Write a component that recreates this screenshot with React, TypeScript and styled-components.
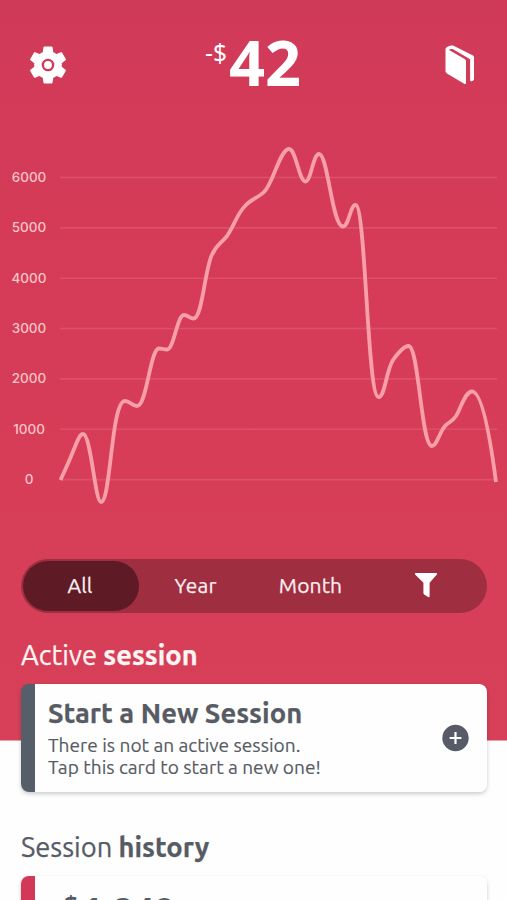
import React from "react";
import styled, { createGlobalStyle } from "styled-components";

const GlobalStyle = createGlobalStyle`
  * { box-sizing: border-box; }
  html, body { margin: 0; height: 100%; overflow: hidden; background: #fefefe; }
  body { font-family: Ubuntu, "Noto Sans", sans-serif; color: #565b64; }
  button { border: 0; padding: 0; background: none; color: inherit; font: inherit; }
`;

const Screen = styled.main`
  width: 507px;
  height: 900px;
  overflow: hidden;
  background: linear-gradient(#d03a59 0, #d53b57 220px, #d73d57 480px, #d74058 740px, #fefefe 741px);
`;

const Header = styled.header`
  height: 130px;
  display: grid;
  grid-template-columns: 96px 1fr 95px;
  padding-top: 32px;
  color: #fff;
`;

const IconButton = styled.button`
  height: 66px;
  display: flex;
  align-items: center;
  justify-content: center;
`;

const Balance = styled.h1`
  margin: 0;
  height: 66px;
  display: flex;
  align-items: flex-start;
  padding-left: 109px;
  font-family: "Noto Sans", sans-serif;
`;

const Currency = styled.span`
  width: 24px;
  font-size: 24.5px;
  font-weight: 400;
  line-height: 42px;
`;

const Amount = styled.span`
  font-size: 63px;
  font-weight: 700;
  line-height: 60px;
`;

const Chart = styled.svg`
  display: block;
  width: 507px;
  height: 400px;
`;

const AxisLabel = styled.text`
  font-family: Inter, sans-serif;
  font-size: 13.5px;
  font-weight: 450;
  fill: #f9c3c8;
  text-anchor: middle;
`;

const Tabs = styled.nav`
  display: grid;
  grid-template-columns: 116px repeat(3, 115px);
  width: 466px;
  height: 54px;
  margin: 29px 0 0 21px;
  padding: 2px;
  border-radius: 27px;
  background: #9f2e41;
`;

const Tab = styled.button<{ $active?: boolean }>`
  display: flex;
  align-items: center;
  justify-content: center;
  padding: 0 2px 2px 0;
  border-radius: 26px;
  font-size: 21px;
  letter-spacing: 0.1px;
  -webkit-text-stroke: 0.25px currentColor;
  color: #fdeef0;
  background: ${(p) => (p.$active ? "#5e1b25" : "transparent")};
`;

const Heading = styled.h2<{ $light?: boolean }>`
  margin: 0;
  padding-left: 21px;
  height: 38px;
  line-height: 37px;
  font-size: 27.3px;
  font-weight: 400;
  white-space: nowrap;
  -webkit-text-stroke: 0.25px currentColor;
  color: ${(p) => (p.$light ? "#fff5f5" : "#565b64")};
`;

const Card = styled.section<{ $accent: string }>`
  display: grid;
  grid-template-columns: 14px 1fr 64px;
  width: 466px;
  height: 108px;
  margin: 0 0 0 21px;
  overflow: hidden;
  border-radius: 8px;
  background: linear-gradient(to right, ${(p) => p.$accent} 14px, #fefefe 14px);
  box-shadow: 0 2px 4px rgba(0, 0, 0, 0.2);
`;

const CardBody = styled.div`
  grid-column: 2;
  padding: 12px 0 0 13px;
  white-space: nowrap;
`;

const CardTitle = styled.h3`
  margin: 0;
  height: 39px;
  line-height: 34px;
  font-size: 27.4px;
  font-weight: 700;
  -webkit-text-stroke: 0.25px currentColor;
`;

const CardText = styled.p`
  margin: 0;
  font-size: 19.1px;
  line-height: 21.5px;
  -webkit-text-stroke: 0.15px currentColor;
`;

const CardAction = styled(IconButton)`
  height: 107px;
`;

const HistoryAmount = styled.div`
  grid-column: 2;
  display: flex;
  align-items: flex-start;
  padding: 14px 0 0 29px;
  font-family: "Noto Sans", sans-serif;
  font-weight: 700;
  font-size: 36px;
  line-height: 42px;
`;

const HistoryCurrency = styled.span`
  width: 18px;
  font-size: 24px;
  line-height: 28px;
`;

const Spacer = styled.div<{ $height: number }>`
  height: ${(p) => p.$height}px;
`;

const Gear = () => (
  <svg width="46" height="46" viewBox="0 0 24 24" fill="currentColor">
    <path
      fillRule="evenodd"
      d="M19.14 12.94c.04-.3.06-.61.06-.94 0-.32-.02-.64-.07-.94l2.03-1.58c.18-.14.23-.41.12-.61l-1.92-3.32c-.12-.22-.37-.29-.59-.22l-2.39.96c-.5-.38-1.03-.7-1.62-.94L14.4 2.81c-.04-.24-.24-.41-.48-.41h-3.84c-.24 0-.43.17-.47.41l-.36 2.54c-.59.24-1.13.57-1.62.94l-2.39-.96c-.22-.08-.47 0-.59.22L2.74 8.87c-.12.21-.08.47.12.61l2.03 1.58c-.05.3-.09.63-.09.94s.02.64.07.94l-2.03 1.58c-.18.14-.23.41-.12.61l1.92 3.32c.12.22.37.29.59.22l2.39-.96c.5.38 1.03.7 1.62.94l.36 2.54c.05.24.24.41.48.41h3.84c.24 0 .44-.17.47-.41l.36-2.54c.59-.24 1.13-.56 1.62-.94l2.39.96c.22.08.47 0 .59-.22l1.92-3.32c.12-.22.07-.47-.12-.61zM12 15.3a3.3 3.3 0 1 1 0-6.6 3.3 3.3 0 0 1 0 6.6z"
    />
    <circle cx="12" cy="12" r="2.05" />
  </svg>
);

const Book = () => (
  <svg width="30" height="40" viewBox="0 0 30 40" fill="currentColor">
    <path
      fillRule="evenodd"
      d="M.5 4.2C.5 2 5.5.1 8 .6l20 10c.7.4 1 .9 1 1.6v22c0 .9-.8 1.4-1.6 1.8-1.3.7-2.3 0-2.3-1.3V14.3L8.1 4.2C6.5 3.6 4.6 4.2 4 5l15.7 9.1c.8.5 1.3 1.2 1.3 2.1v21.7c0 1.1-.9 1.5-1.8.9L1.9 28.4c-.9-.5-1.4-1.3-1.4-2.3z"
    />
  </svg>
);

const Funnel = () => (
  <svg width="24" height="26" viewBox="0 0 24 26" fill="#fff">
    <path d="M1.6 1h20.8c.7 0 .9.8.5 1.5l-7.3 8.3v13.7c0 .8-.8 1-1.4.6l-4-2.7c-.5-.4-.8-.9-.8-1.5V10.8L1.1 2.5C.7 1.8.9 1 1.6 1z" />
  </svg>
);

const Plus = () => (
  <svg width="28" height="28" viewBox="0 0 28 28">
    <circle cx="14.5" cy="14" r="13.2" fill="#565b67" />
    <path d="M14.5 8.1v11.8M8.6 14h11.8" stroke="#fff" strokeWidth="2.2" />
  </svg>
);

const ticks = [6000, 5000, 4000, 3000, 2000, 1000, 0];

const BalanceChart = () => (
  <Chart viewBox="0 130 507 400">
    {ticks.map((tick, i) => {
      const y = 177.5 + i * 50.35;
      return (
        <g key={tick}>
          <path d={`M60 ${y}H497`} stroke="#dc5069" strokeWidth="1.6" />
          <AxisLabel x="29" y={y + 4.3}>{tick}</AxisLabel>
        </g>
      );
    })}
    <path
      fill="none"
      stroke="#f79fa9"
      strokeWidth="3.8"
      strokeLinejoin="round"
      d="M60.5 480C64 472 68 464 72 454C76 445 79 434 83 434C91 434 95 502 101 502C111 502 111 401 125 401C130 401 132 406 137 406C147 406 150 348.5 159 348.5C163 348.5 163 349.5 167 349.5C174 349.5 177 315 184 315C188 315 189 318.5 193.5 318.5C202 318.5 204 276 211 257C216 244 221 244 227 236C234 226 237 214 245 206C251 199 258 198 264 192C273 184 280 149 289 149C296 149 299 181.5 305.5 181.5C311 181.5 313 154 319 154C328 154 332 226.5 343 226.5C349 226.5 350 205 355.5 205C366 205 367 397 378.5 397C385 397 386 371 393 360C398 353 404 346 408.5 346C419 346 421 446 432 446C437 446 440 430 446 425C449 422 452 422 456 416C461 408 465 391.5 472 391.5C484 391.5 493 459 496 482"
    />
  </Chart>
);

export default function App() {
  return (
    <>
      <GlobalStyle />
      <Screen>
        <Header>
          <IconButton aria-label="Settings"><Gear /></IconButton>
          <Balance>
            <Currency>-$</Currency>
            <Amount>42</Amount>
          </Balance>
          <IconButton aria-label="Journal"><Book /></IconButton>
        </Header>
        <BalanceChart />
        <Tabs>
          <Tab $active>All</Tab>
          <Tab>Year</Tab>
          <Tab>Month</Tab>
          <Tab aria-label="Filter"><Funnel /></Tab>
        </Tabs>
        <Spacer $height={24} />
        <Heading $light>Active <b>session</b></Heading>
        <Spacer $height={9} />
        <Card $accent="#555e69">
          <CardBody>
            <CardTitle>Start a New Session</CardTitle>
            <CardText>There is not an active session.<br />Tap this card to start a new one!</CardText>
          </CardBody>
          <CardAction aria-label="Start session"><Plus /></CardAction>
        </Card>
        <Spacer $height={37} />
        <Heading>Session <b>history</b></Heading>
        <Spacer $height={9} />
        <Card $accent="#d33858">
          <HistoryAmount>
            <HistoryCurrency>$</HistoryCurrency>
            <span>1,240</span>
          </HistoryAmount>
        </Card>
      </Screen>
    </>
  );
}
